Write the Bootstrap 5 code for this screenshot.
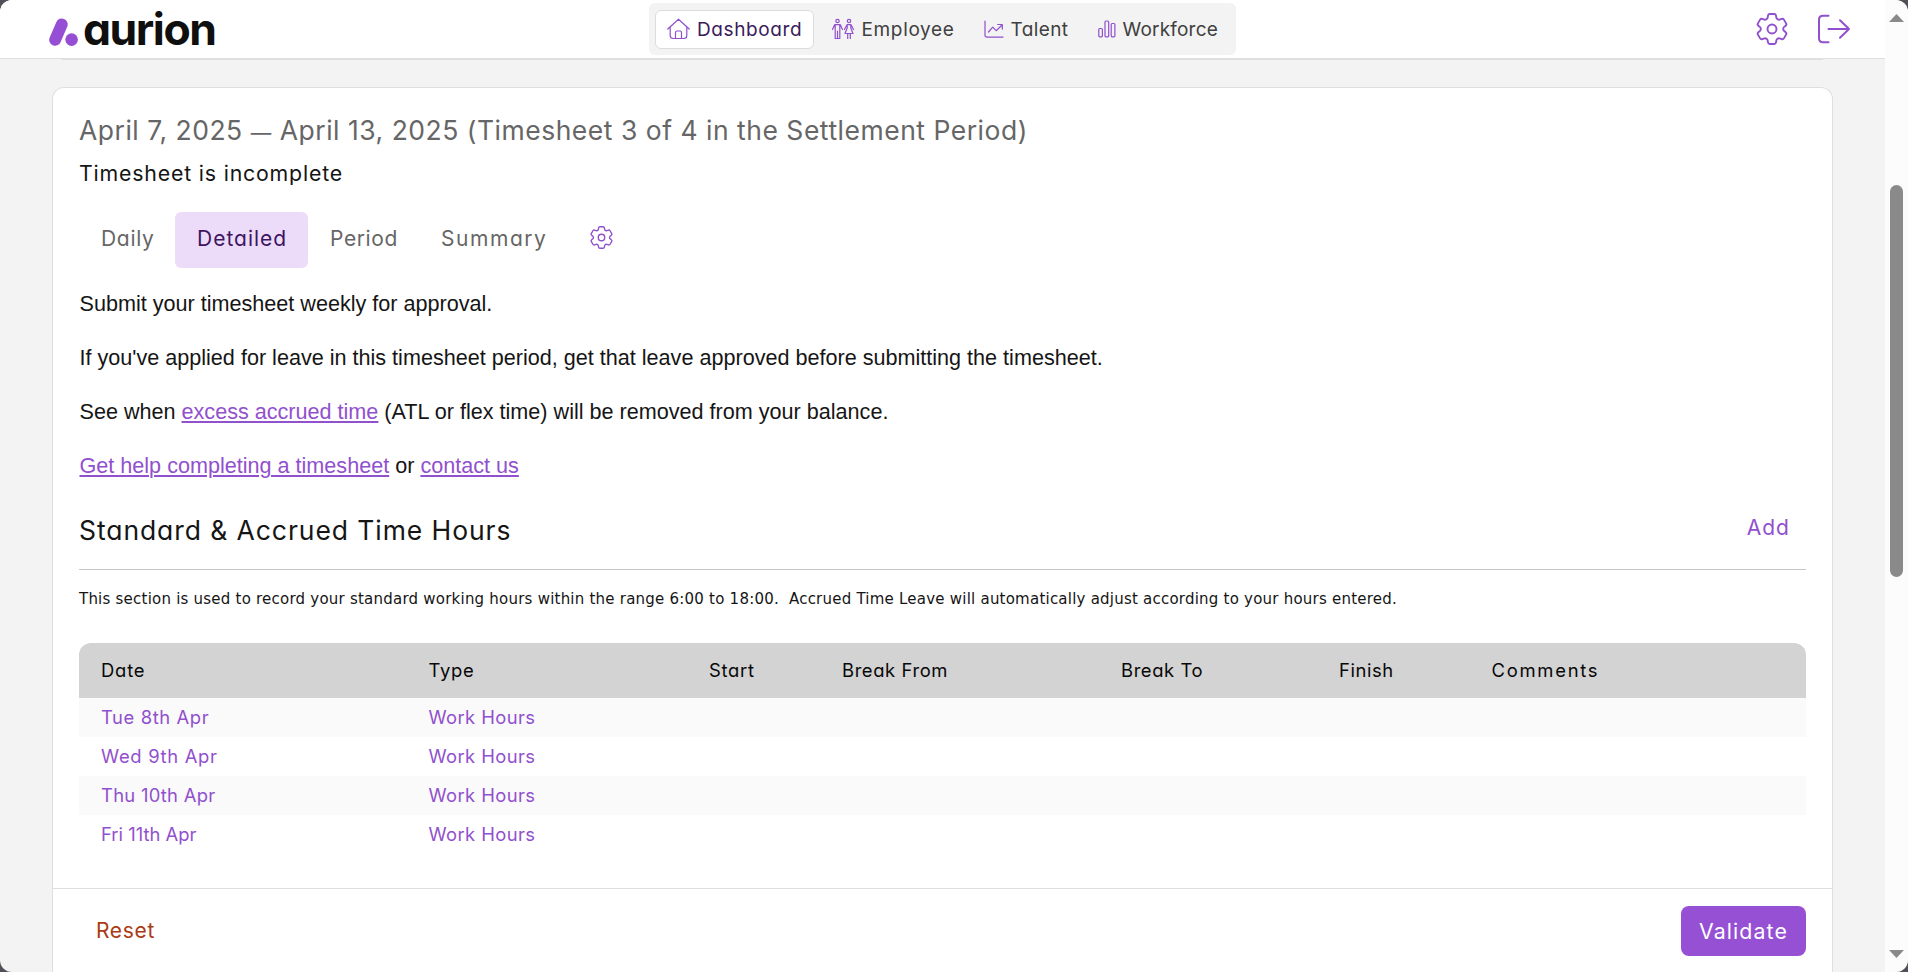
<!DOCTYPE html>
<html lang="en">
<head>
<meta charset="utf-8">
<title>Aurion timesheet</title>
<link href="https://cdn.jsdelivr.net/npm/bootstrap@5.3.0/dist/css/bootstrap.min.css" rel="stylesheet">
<style>
:root{--brand:#9150cd;--rule:#dedfe0}
body{background:#505058;font-family:Inter,sans-serif;font-feature-settings:"cv11";color:#151515;overflow:hidden}
a{color:var(--brand)}
svg{fill:none;stroke:var(--brand);flex-shrink:0;display:block}
.shell{height:972px;background:#f3f3f3;border-radius:12px}
/* top bar */
.topbar{display:grid;grid-template-columns:649px 587px 1fr;height:59px;background:#fff;border-bottom:1px solid var(--rule)}
.seam{height:1px;margin:0 62px;background:var(--rule)}
.brand-word{font-size:44.5px;font-weight:700;line-height:58px;letter-spacing:-1.45px;color:#0f0f0f;margin-left:3px}
.pillbar{background:#f3f3f3;border-radius:6px;height:52px;margin-top:3px}
.pillbar a{font-size:19px;line-height:28px;color:#404040;text-decoration:none;white-space:nowrap;display:flex;align-items:center}
.pillbar a span{margin-left:7px;padding-top:2px}
.pillbar .is-on{background:#fff;border:1px solid #dcdcdc;border-radius:6px;color:#3a1a5c;height:39px;width:158.5px;margin-left:6px;padding-left:11px;letter-spacing:.6px}
.pill-emp{width:157.5px;padding-left:17px;letter-spacing:.65px}
.pill-tal{width:113.5px;padding-left:12.5px;letter-spacing:.4px}
.pill-wrk{width:151px;padding-left:13px;letter-spacing:.2px}
/* timesheet sheet */
.sheet{margin:27px 52px 0;background:#fff;border:1px solid var(--rule);border-bottom:0;border-radius:12px 12px 0 0;height:885px}
.inner{height:801px;padding:22px 26px 0;border-bottom:1px solid var(--rule)}
.period{font-size:26.5px;line-height:40px;letter-spacing:.51px;color:#666;font-weight:400}
.period span{font-size:20.5px;line-height:1}
.state{font-size:21.3px;line-height:32px;letter-spacing:.82px;margin:7px 0 23px}
.tabs{height:56px;font-size:21px}
.tabs a{color:#666;text-decoration:none;height:56px;line-height:53px;padding-left:22px}
.tabs .is-on{background:#ecdcfa;color:#3f155f;border-radius:6px}
.tabs svg{margin-top:14px}
.t-daily{width:96px;letter-spacing:.7px}
.t-detail{width:133px;letter-spacing:1px}
.t-period{width:111px;letter-spacing:.6px}
.t-summary{width:149px;letter-spacing:1.55px}
.notes{font:21.6px/54px "Liberation Sans",Arial,sans-serif;padding:9px 0 0 .5px;margin-bottom:-1px}
.notes a{text-decoration-thickness:2px;text-underline-offset:2px}
.section-row{height:78px;padding-top:18px;border-bottom:1px solid #c6c6c6}
.section-row h2{font-size:26.5px;line-height:40px;font-weight:400;letter-spacing:.92px}
.section-row a{font-size:21px;line-height:36px;letter-spacing:1.05px;text-decoration:none;padding-right:16px}
.hint{font:15px/24px "DejaVu Sans",Verdana,sans-serif;letter-spacing:.226px;margin:17px 0 32px;white-space:nowrap}
.hours{width:1727px;table-layout:fixed;font-size:18.4px;border-collapse:separate;border-spacing:0}
.hours th{background:#d3d3d3;height:55px;font-weight:400;color:#080808;padding:0 0 0 22px}
.hours th:first-child{border-top-left-radius:12px}
.hours th:last-child{border-top-right-radius:12px}
.hours td{height:39px;padding:0 0 0 22px;color:var(--brand);letter-spacing:.4px}
.hours tbody tr:nth-child(odd) td{background:#fafafa}
.hours .s0{letter-spacing:0}
.hours .s3{letter-spacing:.28px}
.hours .s6{letter-spacing:.6px}
.hours .s7{letter-spacing:.7px}
.hours .s8{letter-spacing:.82px}
.hours .s17{letter-spacing:1.75px}
.actions{padding:0 26px 0 43px;height:83px}
.btn-reset{color:#a93b15;font-size:21px;letter-spacing:.65px;text-decoration:none}
.btn-validate,.btn-validate:hover{background:#9550d4;color:#fff;border:0;border-radius:8px;width:125px;height:50px;font-size:21.3px;letter-spacing:1.1px;padding:0;line-height:48px}
/* scrollbar */
.scrollrail{width:23px;background:#fcfcfc;border-radius:0 12px 12px 0;padding:14px 0 13px 4px}
.scrollrail svg{fill:#8a8a8a;stroke:none}
.thumb{width:13px;height:392px;border-radius:7px;background:#8a8a8a;margin:163px 0 373px 1px}
</style>
</head>
<body>
<svg width="0" height="0" class="position-absolute"><defs><symbol id="cog" viewBox="2.4 2.4 19.2 19.2"><path d="M9.594 3.94c.09-.542.56-.94 1.11-.94h2.593c.55 0 1.02.398 1.11.94l.213 1.281c.063.374.313.686.645.87.074.04.147.083.22.127.325.196.72.257 1.075.124l1.217-.456a1.125 1.125 0 0 1 1.37.49l1.296 2.247a1.125 1.125 0 0 1-.26 1.431l-1.003.827c-.293.241-.438.613-.43.992a7.723 7.723 0 0 1 0 .255c-.008.378.137.75.43.991l1.004.827c.424.35.534.955.26 1.43l-1.298 2.247a1.125 1.125 0 0 1-1.369.491l-1.217-.456c-.355-.133-.75-.072-1.076.124a6.47 6.47 0 0 1-.22.128c-.331.183-.581.495-.644.869l-.213 1.281c-.09.543-.56.94-1.11.94h-2.594c-.55 0-1.019-.398-1.11-.94l-.213-1.281c-.062-.374-.312-.686-.644-.87a6.52 6.52 0 0 1-.22-.127c-.325-.196-.72-.257-1.076-.124l-1.217.456a1.125 1.125 0 0 1-1.369-.49l-1.297-2.247a1.125 1.125 0 0 1 .26-1.431l1.004-.827c.292-.24.437-.613.43-.991a6.932 6.932 0 0 1 0-.255c.007-.38-.138-.751-.43-.992l-1.004-.827a1.125 1.125 0 0 1-.26-1.43l1.297-2.247a1.125 1.125 0 0 1 1.37-.491l1.216.456c.356.133.751.072 1.076-.124.072-.044.146-.086.22-.128.332-.183.582-.495.644-.869l.214-1.28Z"/><circle cx="12" cy="12" r="2.7"/></symbol></defs></svg>
<div class="shell d-flex overflow-hidden">
  <div class="flex-grow-1">
    <header class="topbar">
      <div class="d-flex align-items-center ps-5">
        <svg width="32" height="58" viewBox="48 0 32 58" stroke="none"><path d="M61.8 24.3 55.1 39.8" stroke="#964fd4" stroke-width="11.8" stroke-linecap="round"/><circle cx="71.6" cy="39.6" r="6.3" fill="#964fd4" stroke="none"/></svg>
        <span class="brand-word">aurion</span>
      </div>
      <nav class="pillbar d-flex align-items-center">
        <a href="#" class="is-on"><svg width="23" height="22" stroke-width="1.2" stroke-linejoin="round" stroke-linecap="round"><path d="M.8 11 11.5 1.2 22.2 11M3.2 9v8.500q0 3 3 3h10.600q3 0 3-3V9M8.500 20.500v-6q0-1.500 1.500-1.500h3q1.500 0 1.500 1.500v6"/></svg><span>Dashboard</span></a>
        <a href="#" class="pill-emp"><svg width="24" height="22" stroke-width="1.2" stroke-linejoin="round" stroke-linecap="round"><circle cx="6.500" cy="3" r="1.700"/><path d="M1.500 11.500 3.700 6.700h5.600l2.200 4.800M4.200 7v13.500h1.600M8.800 7v13.500H7.200M6.500 13v7.500"/><circle cx="18" cy="3" r="1.700"/><path d="m13.500 11.500 2.500-4.800h4l2.500 4.800M16.200 7v3L14 15.500h8L19.800 10V7M16.700 15.500v5M19.300 15.500v5"/></svg><span>Employee</span></a>
        <a href="#" class="pill-tal"><svg width="20" height="22" stroke-width="1.200" stroke-linejoin="round" stroke-linecap="round"><path d="M1 3v14q0 2.200 2.200 2.200H19M4.500 14l4.200-4.800 3.500 3.500L18 7M13.700 6.500h4.600v4.600"/></svg><span>Talent</span></a>
        <a href="#" class="pill-wrk"><svg width="18" height="22" stroke-width="1.200"><rect x=".8" y="10.500" width="3.600" height="8.300" rx="1"/><rect x="7" y="3" width="3.700" height="15.800" rx="1"/><rect x="13.200" y="5.500" width="3.700" height="13.300" rx="1"/></svg><span>Workforce</span></a>
      </nav>
      <div class="d-flex align-items-center justify-content-end">
        <svg width="32" height="32" stroke-width="1.15"><use href="#cog"/></svg>
        <svg class="ms-4" width="40" height="30" viewBox="1812.500 14 40 30" stroke-width="2" stroke-linecap="round" stroke-linejoin="round"><path d="M1829 15.800h-5.500q-4 0-4 4v18.400q0 4 4 4h5.500M1829 29h20.500M1840.500 20.300l9 8.700-9 8.700"/></svg>
        <span class="pe-4 me-2 border-end border-white"></span>
      </div>
    </header>
    <div class="seam"></div>
    <main class="sheet">
      <div class="inner">
        <h1 class="period m-0">April 7, 2025 <span>—</span> April 13, 2025 (Timesheet 3 of 4 in the Settlement Period)</h1>
        <p class="state">Timesheet is incomplete</p>
        <nav class="tabs d-flex">
          <a href="#" class="t-daily">Daily</a>
          <a href="#" class="t-detail is-on">Detailed</a>
          <a href="#" class="t-period">Period</a>
          <a href="#" class="t-summary">Summary</a>
          <a href="#"><svg width="23" height="23" stroke-width="1.150"><use href="#cog"/></svg></a>
        </nav>
        <div class="notes">
          <div>Submit your timesheet weekly for approval.</div>
          <div>If you've applied for leave in this timesheet period, get that leave approved before submitting the timesheet.</div>
          <div>See when <a href="#">excess accrued time</a> (ATL or flex time) will be removed from your balance.</div>
          <div><a href="#">Get help completing a timesheet</a> or <a href="#">contact us</a></div>
        </div>
        <div class="section-row d-flex justify-content-between">
          <h2 class="m-0">Standard &amp; Accrued Time Hours</h2>
          <a href="#">Add</a>
        </div>
        <p class="hint">This section is used to record your standard working hours within the range 6:00 to 18:00.&nbsp; Accrued Time Leave will automatically adjust according to your hours entered.</p>
        <table class="hours">
          <colgroup><col style="width:327.500px"><col style="width:280.500px"><col style="width:133px"><col style="width:279px"><col style="width:218px"><col style="width:152.500px"><col></colgroup>
          <thead><tr><th class="s8">Date</th><th class="s7">Type</th><th class="s7">Start</th><th class="s6">Break From</th><th class="s6">Break To</th><th class="s6">Finish</th><th class="s17">Comments</th></tr></thead>
          <tbody>
            <tr><td class="s6">Tue 8th Apr</td><td>Work Hours</td><td></td><td></td><td></td><td></td><td></td></tr>
            <tr><td class="s7">Wed 9th Apr</td><td>Work Hours</td><td></td><td></td><td></td><td></td><td></td></tr>
            <tr><td class="s3">Thu 10th Apr</td><td>Work Hours</td><td></td><td></td><td></td><td></td><td></td></tr>
            <tr><td class="s0">Fri 11th Apr</td><td>Work Hours</td><td></td><td></td><td></td><td></td><td></td></tr>
          </tbody>
        </table>
      </div>
      <div class="actions d-flex align-items-center justify-content-between">
        <a href="#" class="btn-reset">Reset</a>
        <button class="btn btn-validate">Validate</button>
      </div>
    </main>
  </div>
  <aside class="scrollrail">
    <svg width="15" height="8"><path d="M7.500 0 15 8H0Z"/></svg>
    <div class="thumb"></div>
    <svg width="15" height="8"><path d="M0 0h15L7.500 8Z"/></svg>
  </aside>
</div>
<script src="https://cdn.jsdelivr.net/npm/bootstrap@5.3.0/dist/js/bootstrap.bundle.min.js"></script>
</body>
</html>
